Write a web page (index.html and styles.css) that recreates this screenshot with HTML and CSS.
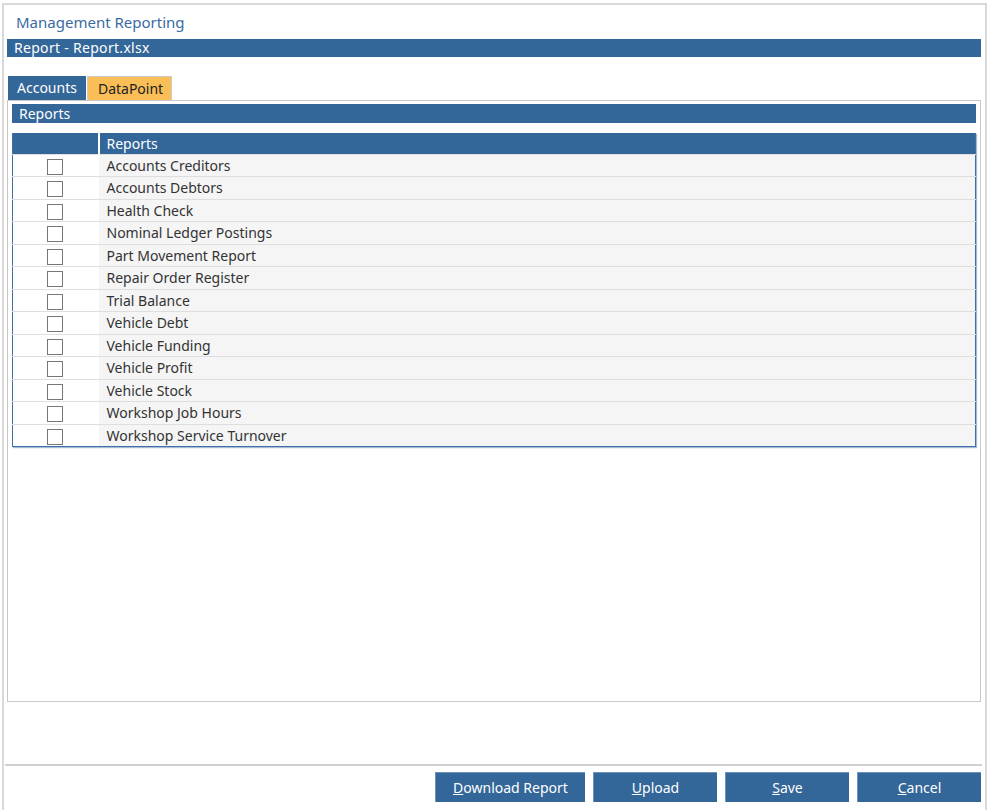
FILE: index.html
```html
<!DOCTYPE html>
<html lang="en">
<head>
    <meta charset="UTF-8">
    <title>Management Reporting</title>
    <link rel="stylesheet" href="styles.css">
</head>
<body>
    <div class="window">
        <h1 class="title">Management Reporting</h1>
        <div class="bar">Report - Report.xlsx</div>

        <div class="tabs">
            <div class="tab active">Accounts</div>
            <div class="tab alt">DataPoint</div>
        </div>

        <div class="panel">
            <div class="section">Reports</div>

            <table class="grid">
                <thead>
                    <tr>
                        <th class="check-col"></th>
                        <th>Reports</th>
                    </tr>
                </thead>
                <tbody>
                    <tr><td class="check-col"><span class="box"></span></td><td>Accounts Creditors</td></tr>
                    <tr><td class="check-col"><span class="box"></span></td><td>Accounts Debtors</td></tr>
                    <tr><td class="check-col"><span class="box"></span></td><td>Health Check</td></tr>
                    <tr><td class="check-col"><span class="box"></span></td><td>Nominal Ledger Postings</td></tr>
                    <tr><td class="check-col"><span class="box"></span></td><td>Part Movement Report</td></tr>
                    <tr><td class="check-col"><span class="box"></span></td><td>Repair Order Register</td></tr>
                    <tr><td class="check-col"><span class="box"></span></td><td>Trial Balance</td></tr>
                    <tr><td class="check-col"><span class="box"></span></td><td>Vehicle Debt</td></tr>
                    <tr><td class="check-col"><span class="box"></span></td><td>Vehicle Funding</td></tr>
                    <tr><td class="check-col"><span class="box"></span></td><td>Vehicle Profit</td></tr>
                    <tr><td class="check-col"><span class="box"></span></td><td>Vehicle Stock</td></tr>
                    <tr><td class="check-col"><span class="box"></span></td><td>Workshop Job Hours</td></tr>
                    <tr><td class="check-col"><span class="box"></span></td><td>Workshop Service Turnover</td></tr>
                </tbody>
            </table>
        </div>

        <div class="footer">
            <button class="btn wide"><u>D</u>ownload Report</button>
            <button class="btn"><u>U</u>pload</button>
            <button class="btn"><u>S</u>ave</button>
            <button class="btn"><u>C</u>ancel</button>
        </div>
    </div>
</body>
</html>
```

FILE: styles.css
```css
* {
    margin: 0;
    padding: 0;
    box-sizing: border-box;
}

body {
    font-family: 'Noto Sans', 'Open Sans', sans-serif;
    font-size: 14px;
    color: #333;
    background: #fff;
}

.window {
    margin: 3px 2px 0 2px;
    height: 807px;
    border: 2px solid #d9d9d9;
    border-bottom: none;
    padding: 0 3px;
    display: flex;
    flex-direction: column;
}

.title {
    font-size: 15px;
    font-weight: normal;
    color: #3a6aa3;
    height: 34px;
    line-height: 35px;
    padding-left: 9px;
}

.bar {
    background: #336699;
    color: #fff;
    height: 18px;
    line-height: 18px;
    padding-left: 7px;
    margin-right: 1px;
    letter-spacing: 0.3px;
}

.tabs {
    display: flex;
    margin-top: 19px;
    margin-left: 1px;
}

.tab {
    height: 24px;
    line-height: 24px;
    padding: 0 9px;
    margin-right: 1px;
}

.tab.active {
    background: #336699;
    color: #fff;
}

.tab.alt {
    background: #f9bf56;
    color: #222;
    border: 1px solid #ccc;
    border-bottom: none;
    padding: 0 8px 0 10px;
}

.panel {
    height: 602px;
    border: 1px solid #c8c8c8;
    margin-right: 1px;
    padding: 3px 4px;
}

.section {
    background: #336699;
    color: #fff;
    height: 19px;
    line-height: 19px;
    padding-left: 7px;
    margin-bottom: 10px;
}

.grid {
    width: 100%;
    border-collapse: collapse;
    border: 1px solid #3f6fa6;
    border-top: none;
    box-shadow: 1px 1px 1px rgba(80, 120, 180, 0.5);
}

.grid th {
    background: #336699;
    color: #fff;
    font-weight: normal;
    text-align: left;
    height: 21px;
    padding-left: 7px;
    border-left: 2px solid #fff;
}

.grid th.check-col {
    border-left: none;
}

.grid td {
    height: 22.5px;
    padding-left: 8px;
    background: #f5f5f5;
    border-top: 1px solid #dedede;
    color: #333;
}

.grid .check-col {
    width: 86px;
    padding: 0 2px 0 0;
    text-align: center;
}

.grid td.check-col {
    background: #fff;
    padding: 0 2px 0 0;
}

.box {
    display: inline-block;
    width: 16px;
    height: 16px;
    border: 1px solid #777;
    background: #fff;
    vertical-align: middle;
}

.footer {
    margin-top: auto;
    margin-bottom: 8px;
    border-top: 2px solid #d0d0d0;
    padding: 6px 1px 0 0;
    display: flex;
    justify-content: flex-end;
    gap: 8px;
    margin-left: -2px;
}

.btn {
    width: 124px;
    height: 30px;
    background: #336699;
    color: #fff;
    border: none;
    border-top: 1px solid #6f92bb;
    border-left: 1px solid #6f92bb;
    font-family: inherit;
    font-size: 14px;
}

.btn.wide {
    width: 150px;
}
```
